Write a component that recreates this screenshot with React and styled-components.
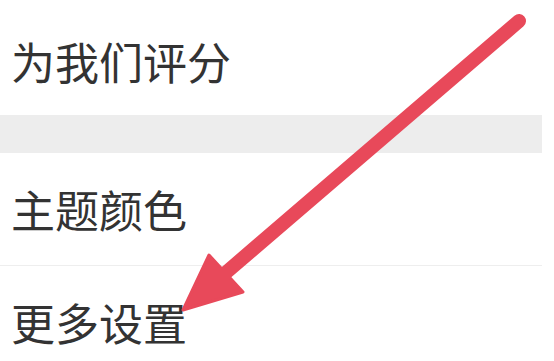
import styled, { createGlobalStyle } from 'styled-components';

const GlobalStyle = createGlobalStyle`
  html, body {
    margin: 0;
    padding: 0;
    background: #ffffff;
    overflow: hidden;
  }
`;

const Screen = styled.div`
  position: relative;
  width: 554px;
  height: 361px;
  overflow: hidden;
  background: #ffffff;
`;

const List = styled.div`
  width: 542px;
  display: flex;
  flex-direction: column;
`;

const Item = styled.div`
  height: ${(p) => p.$height}px;
  display: flex;
  align-items: center;
  padding: ${(p) => p.$shift || 0}px 0 0 11px;
  box-sizing: border-box;
  font-family: 'Noto Sans CJK SC', 'Noto Sans', sans-serif;
  font-size: 44px;
  color: #333333;
  border-bottom: ${(p) => (p.$divider ? '1px solid #eeeeee' : 'none')};
`;

const Gap = styled.div`
  height: 38px;
  background: #ededed;
`;

const Arrow = styled.svg`
  position: absolute;
  left: 0;
  top: 0;
  pointer-events: none;
`;

const App = () => {
  return (
    <Screen>
      <GlobalStyle />
      <List>
        <Item $height={115} $shift={6}>为我们评分</Item>
        <Gap />
        <Item $height={113} $divider>主题颜色</Item>
        <Item $height={112}>更多设置</Item>
      </List>
      <Arrow width="554" height="361" viewBox="0 0 554 361">
        <line
          x1="519"
          y1="21"
          x2="222"
          y2="276"
          stroke="#e8495a"
          strokeWidth="14"
          strokeLinecap="round"
        />
        <polygon
          points="183,310 209,255 243,292"
          fill="#e8495a"
          stroke="#e8495a"
          strokeWidth="3"
          strokeLinejoin="round"
        />
      </Arrow>
    </Screen>
  );
};

export default App;
